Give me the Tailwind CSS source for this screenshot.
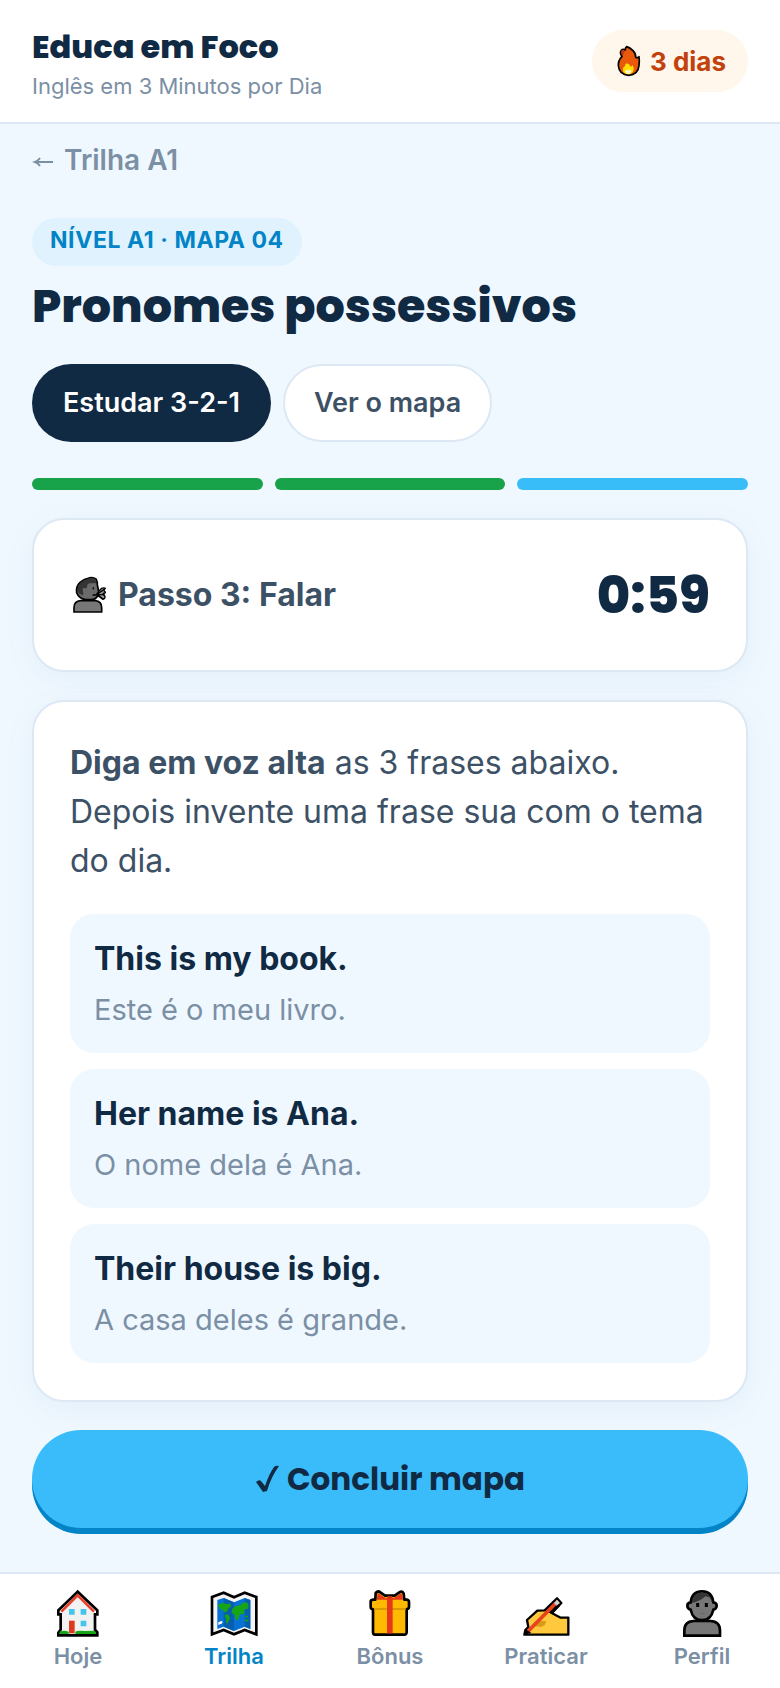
<!DOCTYPE html>
<html lang="pt-BR">
<head>
<meta charset="utf-8">
<meta name="viewport" content="width=device-width, initial-scale=1">
<title>Educa em Foco</title>
<script src="https://cdn.jsdelivr.net/npm/@tailwindcss/browser@4"></script>
</head>
<body class="flex min-h-screen flex-col bg-[#f0f8ff] font-['Inter','Liberation_Sans',sans-serif] text-[#3d5166]">

<header class="flex items-center justify-between border-b-2 border-[#dce8f3] bg-white px-8 py-[22px]">
  <div>
    <p class="font-['Poppins','Inter',sans-serif] text-[32px] leading-[50px] font-extrabold text-[#102a43]">Educa em Foco</p>
    <p class="text-[22px] leading-7 text-[#7b8fa5]">Inglês em 3 Minutos por Dia</p>
  </div>
  <div class="flex h-[62px] items-center gap-2 rounded-full bg-[#fff7eb] px-[22px] text-[26px] font-bold text-[#c2410c]">
    <svg class="h-8 w-7" viewBox="163 135 84 96" aria-hidden="true">
      <path d="M201 140q10 3 19 12q9 9 8 20q7 2 10-2q2 14 0 27q-3 28-31 29q-28-1-31-29q-1-15 11-28q-8-10-2-18q4-5 12-1q-1-6 4-10z" fill="#e8590c" stroke="#000" stroke-width="5" stroke-linejoin="round"/>
      <path d="M185 151q8-3 10 3q-2 8-7 13q-6-9-3-16z" fill="#b93b13"/>
      <path d="M191 216q-4-14 5-17q-1-6 5-9q10 2 12 10q5-1 5-5q7 9 2 20q-5 8-14 8q-10 0-15-7z" fill="#ffdd00"/>
      <path d="M196 214l6-5 3 3 6-4 4 7q-4 7-10 7-6-1-9-8z" fill="#fffbd6"/>
    </svg>
    <span>3 dias</span>
  </div>
</header>

<main class="flex flex-1 flex-col px-8 pt-4 pb-[38px]">
  <a href="#" class="flex items-center gap-2 self-start text-[28px] leading-10 font-semibold text-[#7b8fa5]">
    <svg class="mt-1 h-6 w-6" viewBox="0 0 24 24" fill="none" stroke="currentColor" stroke-width="2" aria-hidden="true"><path d="M21 12H3M8 8q-2 3-5 4q3 1 5 4"/></svg>
    Trilha A1
  </a>

  <p class="mt-[38px] self-start rounded-3xl bg-[#e0f2fe] px-[18px] pt-1 pb-2 text-[23px] leading-9 font-bold tracking-wide text-[#0284c7]">NÍVEL A1 · MAPA 04</p>
  <h1 class="mt-[11px] font-['Poppins','Inter',sans-serif] text-[46px] leading-[58px] font-extrabold text-[#102a43]">Pronomes possessivos</h1>

  <div class="mt-[29px] flex gap-3">
    <button type="button" class="h-[78px] rounded-[39px] bg-[#102a43] px-[31px] text-[27px] font-semibold text-white">Estudar 3-2-1</button>
    <button type="button" class="h-[78px] rounded-[39px] border-2 border-[#dce8f3] bg-white px-[29px] text-[27px] font-semibold">Ver o mapa</button>
  </div>

  <div class="mt-9 grid grid-cols-3 gap-3">
    <span class="h-3 rounded-full bg-[#18a34a]"></span>
    <span class="h-3 rounded-full bg-[#18a34a]"></span>
    <span class="h-3 rounded-full bg-[#38bdf8]"></span>
  </div>

  <section class="mt-7 flex h-[154px] items-center justify-between rounded-[32px] border-2 border-[#dce8f3] bg-white px-9 shadow-[0_8px_32px_rgba(2,100,140,0.06)]">
    <h2 class="flex items-center gap-2 text-[32px] font-bold">
      <svg class="h-10 w-10" viewBox="217 225 110 120" aria-hidden="true">
        <path d="M224 336V323q0-20 20-21h43q20 1 20 21v13z" fill="#777" stroke="#000" stroke-width="5"/>
        <path d="M264 236q14-7 26 1q5 9 4 18l5 22-6 4 2 6q-5 12-20 12h-16q-20-3-27-21q-4-31 32-42z" fill="#6b6b6b" stroke="#000" stroke-width="5" stroke-linejoin="round"/>
        <path d="M264 237q14-6 26 1l1 12h-21q-7 2-7 12l-9 8-3 16-13-6q-11-32 26-43z" fill="#343434"/>
        <path d="M250 265q8-5 9 4q0 8-8 10z" fill="#6b6b6b"/>
        <path d="M282 262v6M280 285h12" stroke="#000" stroke-width="4"/>
        <path d="M297 275l10-10q8-3 11 0q-6 4-3 8q5 4 2 6q-7 1-6 5q7 3 6 8q-1 6-8 5l-12-12z" fill="#999" stroke="#000" stroke-width="4" stroke-linejoin="round"/>
        <path d="M294 282l21-14M294 284h22M294 286l19 12" stroke="#000" stroke-width="4"/>
      </svg>
      Passo 3: Falar
    </h2>
    <p class="font-['Poppins','Inter',sans-serif] text-[51px] leading-[64px] font-extrabold text-[#102a43]">0:59</p>
  </section>

  <section class="mt-7 rounded-[32px] border-2 border-[#dce8f3] bg-white px-9 pt-9 pb-[37px] shadow-[0_8px_32px_rgba(2,100,140,0.06)]">
    <p class="text-[32px] leading-[49px]"><strong class="font-bold">Diga em voz alta</strong> as 3 frases abaixo. Depois invente uma frase sua com o tema do dia.</p>
    <ul class="mt-[29px] flex flex-col gap-4">
      <li class="rounded-3xl bg-[#f0f8ff] px-6 pt-5 pb-[17px]">
        <p class="text-[32px] leading-[50px] font-bold text-[#102a43]">This is my book.</p>
        <p class="text-[29px] leading-[52px] text-[#7b8fa5]">Este é o meu livro.</p>
      </li>
      <li class="rounded-3xl bg-[#f0f8ff] px-6 pt-5 pb-[17px]">
        <p class="text-[32px] leading-[50px] font-bold text-[#102a43]">Her name is Ana.</p>
        <p class="text-[29px] leading-[52px] text-[#7b8fa5]">O nome dela é Ana.</p>
      </li>
      <li class="rounded-3xl bg-[#f0f8ff] px-6 pt-5 pb-[17px]">
        <p class="text-[32px] leading-[50px] font-bold text-[#102a43]">Their house is big.</p>
        <p class="text-[29px] leading-[52px] text-[#7b8fa5]">A casa deles é grande.</p>
      </li>
    </ul>
  </section>

  <button type="button" class="mt-7 mb-1.5 flex h-[98px] items-center justify-center gap-2 rounded-[49px] bg-[#3abcfb] font-['Poppins','Inter',sans-serif] text-[31px] font-bold text-[#102a43] shadow-[0_6px_0_#0284c7]">
    <svg class="h-7 w-6" viewBox="0 0 24 28" aria-hidden="true"><path d="M1 17q3-3 5-1l4 5Q14 9 19 2q2-2 5-1Q16 12 12 26l-4 1z" fill="currentColor"/></svg>
    <span>Concluir mapa</span>
  </button>
</main>

<nav aria-label="Principal" class="grid grid-cols-5 border-t-2 border-[#dce8f3] bg-white pt-[15px] pb-[13px] text-[22px] leading-[38px] font-semibold text-[#7b8fa5]">
  <a href="#" class="flex flex-col items-center">
    <svg class="size-12" viewBox="42 27 144 144" aria-hidden="true">
      <path d="M113 35L55 91v12h7v46l-7 9v8h117v-9l-7-8v-46h7V91z" fill="#f2f2f2" stroke="#000" stroke-width="8"/>
      <path d="M64 95l49-49 49 49" fill="none" stroke="#e8412a" stroke-width="8"/>
      <path d="M59 155q12-5 27 0v7H59zM106 155q5-4 30-2l26-1 6 5v5h-62z" fill="#16a516"/>
      <path d="M87 87h17v17H87zM122 87h17v17h-17zM122 122h17v17h-17z" fill="#45c4ec"/>
      <path d="M87 122h17v38H87z" fill="#dd3b20"/>
    </svg>
    Hoje
  </a>
  <a href="#" aria-current="page" class="flex flex-col items-center text-[#0284c7]">
    <svg class="size-12" viewBox="45 27 144 144" aria-hidden="true">
      <path d="M51 51l35-13 31 14 32-14 35 13v112l-35-13-32 13-31-13-35 13z" fill="#f5f5f5" stroke="#000" stroke-width="8"/>
      <path d="M67 60l19-6 31 13 32-13 17 6v87l-17-7-32 13-31-13-19 7z" fill="#0872d4"/>
      <path d="M86 54l31 13v86l-31-13zM149 54l17 6v87l-17-7z" fill="#075eae"/>
      <path d="M69 74l14-6 13 5 9-3 4 9-8 5-6 11-8 2-4-8-8-2-4-7zM91 103l10 2 4 9-8 17-5-6 2-9-5-6zM111 88l10-10 16-2 3-7 15-2 6 8-2 11-10 2-2 15-12-1-6 19-8-3-2-14-9-5z" fill="#16a516"/>
      <path d="M149 107h10v5h-10zM149 119h12v5h-12z" fill="#16a516"/>
      <path d="M70 127l12-5v8l-12 5z" fill="#fff"/>
    </svg>
    Trilha
  </a>
  <a href="#" class="flex flex-col items-center">
    <svg class="size-12" viewBox="48 27 144 144" aria-hidden="true">
      <path d="M62 65q0-5 7-6h7l1-20q7-8 14-2l14 10h29l14-10q8-5 13 3l2 19h7q7 1 7 7v15q0 5-7 7v69q-1 7-6 7H75q-6 0-6-7V88q-7-1-7-7z" fill="#ffb900" stroke="#000" stroke-width="8" stroke-linejoin="round"/>
      <path d="M80 59l3-20 23 15h26l22-15 6 20z" fill="#e33b19"/>
      <path d="M73 84h94v6H73z" fill="#d89a00"/>
      <path d="M111 53h17v107h-17z" fill="#e8381b"/>
      <path d="M112 48h15v6h-15z" fill="#c42a12"/>
    </svg>
    Bônus
  </a>
  <a href="#" class="flex flex-col items-center">
    <svg class="size-12" viewBox="51 27 144 144" aria-hidden="true">
      <path d="M58 164l3-14 9-9-4-21 31-28 22-1 37-36 13 14-29 30 27 14h23v51z" fill="#ffc83d" stroke="#000" stroke-width="7" stroke-linejoin="round"/>
      <path d="M89 139l15-16h19q-1 18-18 17z" fill="#d79b16"/>
      <path d="M119 92l30-29 17 14-24 26z" fill="#000"/>
      <path d="M70 153l83-84" stroke="#e8431d" stroke-width="11"/>
      <path d="M58 164l5-16 16 11z" fill="#000"/>
      <path d="M147 69l9-10 8 9-9 9z" fill="#cfcfd4"/>
    </svg>
    Praticar
  </a>
  <a href="#" class="flex flex-col items-center">
    <svg class="size-12" viewBox="834 567 144 144" aria-hidden="true">
      <path d="M853 707v-15q0-28 28-29h50q29 1 29 29v15z" fill="#777" stroke="#000" stroke-width="8"/>
      <path d="M872 607q4-33 34-33t34 33q10 1 10 10t-10 12q-7 32-34 31q-27 1-34-31q-10-3-10-12t10-10z" fill="#777" stroke="#000" stroke-width="8"/>
      <path d="M875 609q4-32 31-32 25 0 31 30l-9-15-12-3q-17 16-41 20z" fill="#343434"/>
      <path d="M893 609v12M919 609v12" stroke="#000" stroke-width="9"/>
      <path d="M898 639q8 5 16 0" fill="none" stroke="#666" stroke-width="3"/>
    </svg>
    Perfil
  </a>
</nav>
</body>
</html>
